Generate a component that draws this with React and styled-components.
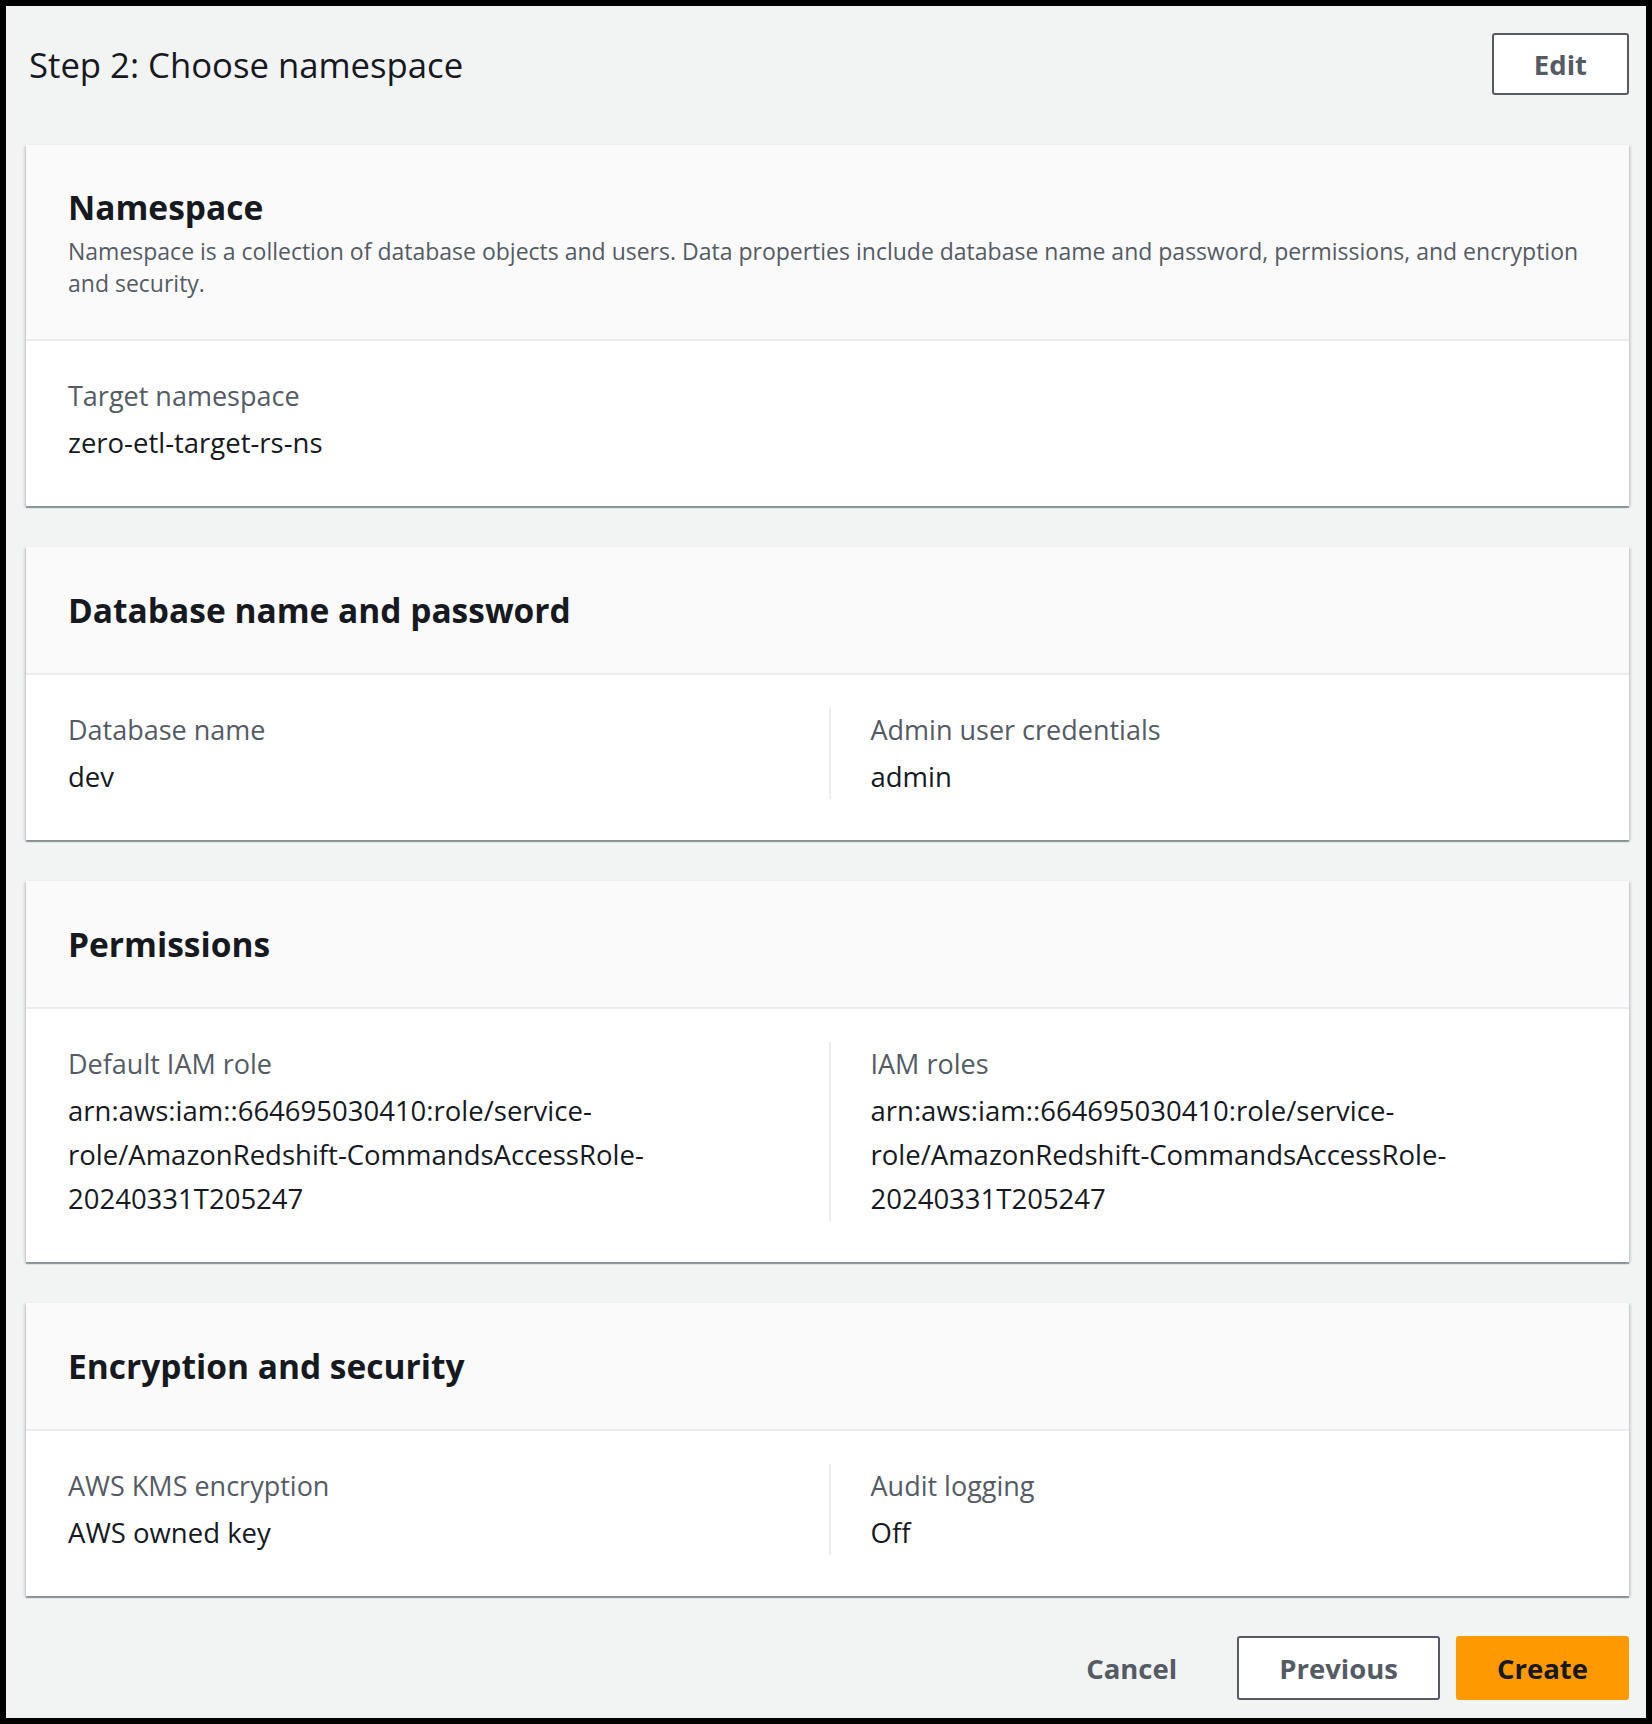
import React from "react";
import styled, { createGlobalStyle } from "styled-components";

const GlobalStyle = createGlobalStyle`
  html, body {
    margin: 0;
    padding: 0;
    background: #000;
  }
  * {
    box-sizing: border-box;
  }
`;

const colors = {
  page: "#f2f3f3",
  headerBg: "#fafafa",
  text: "#16191f",
  label: "#545b64",
  divider: "#eaeded",
  orange: "#ff9900",
};

const Frame = styled.div`
  padding: 6px 6px 7px 6px;
  background: #000;
  font-family: "Open Sans", "Noto Sans", sans-serif;
`;

const Page = styled.main`
  background: ${colors.page};
  padding: 27px 17px 18px 20px;
  display: flex;
  flex-direction: column;
`;

const TopBar = styled.div`
  display: flex;
  align-items: center;
  justify-content: space-between;
  margin-bottom: 50px;
`;

const StepTitle = styled.h1`
  margin: 0;
  font-size: 34.7px;
  font-weight: 400;
  color: ${colors.text};
  padding-left: 3px;
`;

const Button = styled.button`
  font-family: inherit;
  font-size: 27.5px;
  font-weight: 700;
  height: ${(p) => (p.$tall ? "64px" : "62px")};
  padding: 0 ${(p) => p.$pad || 38}px;
  border-radius: 3px;
  cursor: pointer;
  border: 2px solid
    ${(p) =>
      p.$variant === "primary"
        ? colors.orange
        : p.$variant === "link"
        ? "transparent"
        : colors.label};
  background: ${(p) =>
    p.$variant === "primary"
      ? colors.orange
      : p.$variant === "link"
      ? "transparent"
      : "#fff"};
  color: ${(p) => (p.$variant === "primary" ? colors.text : colors.label)};
`;

const Stack = styled.div`
  display: flex;
  flex-direction: column;
  gap: 41px;
`;

const Card = styled.section`
  background: #fff;
  box-shadow: 0 2px 1px 0 rgba(0, 28, 36, 0.35),
    2px 1px 2px 0 rgba(0, 28, 36, 0.12), -2px 1px 2px 0 rgba(0, 28, 36, 0.12);
`;

const CardHeader = styled.header`
  background: ${colors.headerBg};
  border-bottom: 2px solid ${colors.divider};
  padding: ${(p) => (p.$withDesc ? "38px 28px 40px 42px" : "39px 40px 39px 42px")};
`;

const CardTitle = styled.h2`
  margin: 0;
  font-size: 33.5px;
  line-height: 48px;
  font-weight: 700;
  color: ${colors.text};
`;

const CardDesc = styled.p`
  margin: 4px 0 0;
  font-size: 23px;
  line-height: 32px;
  color: ${colors.label};
`;

const CardBody = styled.div`
  padding: 33px 40px 41px 42px;
  display: grid;
  grid-template-columns: ${(p) => (p.$cols === 2 ? "1fr 1fr" : "1fr")};
`;

const Field = styled.div`
  padding-right: 30px;

  & + & {
    border-left: 2px solid ${colors.divider};
    padding-left: 40px;
  }
`;

const Label = styled.div`
  font-size: 27px;
  line-height: 44px;
  color: ${colors.label};
`;

const Value = styled.div`
  margin-top: 3px;
  font-size: 27.5px;
  line-height: 44px;
  color: ${colors.text};
`;

const Footer = styled.div`
  display: flex;
  justify-content: flex-end;
  align-items: center;
  gap: 16px;
  margin-top: 40px;
`;

const arn = (
  <>
    arn:aws:iam::664695030410:role/service-
    <br />
    role/AmazonRedshift-CommandsAccessRole-
    <br />
    20240331T205247
  </>
);

const sections = [
  {
    title: "Database name and password",
    fields: [
      { label: "Database name", value: "dev" },
      { label: "Admin user credentials", value: "admin" },
    ],
  },
  {
    title: "Permissions",
    fields: [
      { label: "Default IAM role", value: arn },
      { label: "IAM roles", value: arn },
    ],
  },
  {
    title: "Encryption and security",
    fields: [
      { label: "AWS KMS encryption", value: "AWS owned key" },
      { label: "Audit logging", value: "Off" },
    ],
  },
];

const App = () => {
  return (
    <Frame>
      <GlobalStyle />
      <Page>
        <TopBar>
          <StepTitle>Step 2: Choose namespace</StepTitle>
          <Button $pad={40}>Edit</Button>
        </TopBar>

        <Stack>
          <Card>
            <CardHeader $withDesc>
              <CardTitle>Namespace</CardTitle>
              <CardDesc>
                Namespace is a collection of database objects and users. Data
                properties include database name and password, permissions, and
                encryption and security.
              </CardDesc>
            </CardHeader>
            <CardBody>
              <Field>
                <Label>Target namespace</Label>
                <Value>zero-etl-target-rs-ns</Value>
              </Field>
            </CardBody>
          </Card>

          {sections.map((section) => (
            <Card key={section.title}>
              <CardHeader>
                <CardTitle>{section.title}</CardTitle>
              </CardHeader>
              <CardBody $cols={2}>
                {section.fields.map((f) => (
                  <Field key={f.label}>
                    <Label>{f.label}</Label>
                    <Value>{f.value}</Value>
                  </Field>
                ))}
              </CardBody>
            </Card>
          ))}
        </Stack>

        <Footer>
          <Button $variant="link" $tall $pad={42}>
            Cancel
          </Button>
          <Button $tall $pad={40}>
            Previous
          </Button>
          <Button $variant="primary" $tall $pad={39}>
            Create
          </Button>
        </Footer>
      </Page>
    </Frame>
  );
};

export default App;
